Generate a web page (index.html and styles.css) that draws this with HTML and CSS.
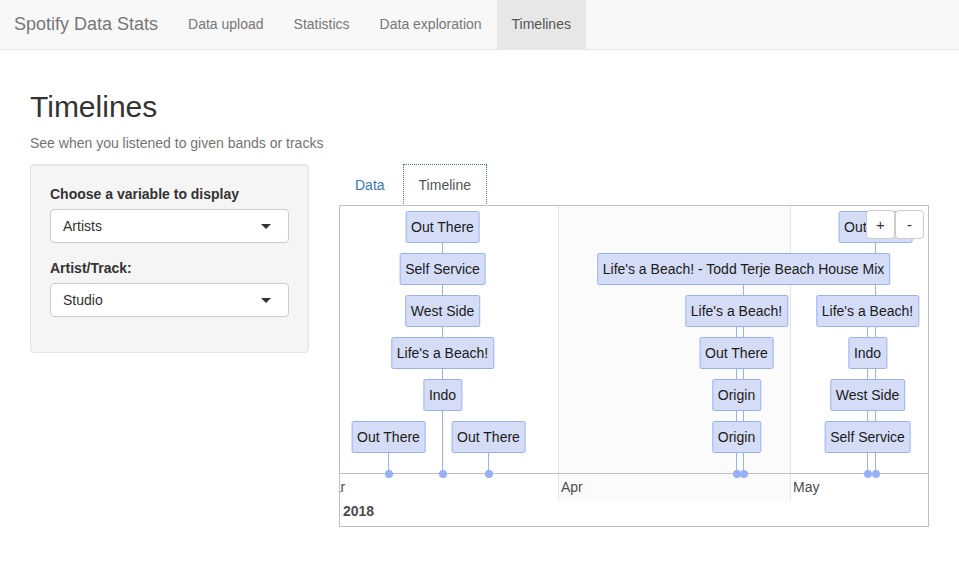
FILE: index.html
```html
<!DOCTYPE html>
<html>
<head>
<meta charset="utf-8">
<title>Spotify Data Stats</title>
<link rel="stylesheet" href="styles.css">
</head>
<body>
<nav class="navbar">
  <span class="brand">Spotify Data Stats</span>
  <ul class="nav">
    <li><a>Data upload</a></li>
    <li><a>Statistics</a></li>
    <li><a>Data exploration</a></li>
    <li class="active"><a>Timelines</a></li>
  </ul>
</nav>
<main class="page">
  <h2 class="title">Timelines</h2>
  <p class="subtitle">See when you listened to given bands or tracks</p>
  <div class="row">
    <aside class="well">
      <div class="form-group">
        <label class="control-label">Choose a variable to display</label>
        <div class="select"><span>Artists</span><span class="caret"></span></div>
      </div>
      <div class="form-group">
        <label class="control-label">Artist/Track:</label>
        <div class="select"><span>Studio</span><span class="caret"></span></div>
      </div>
    </aside>
    <section class="mainpanel">
      <ul class="tabs">
        <li><a>Data</a></li>
        <li class="active"><a>Timeline</a></li>
      </ul>
      <div class="timeline">
        <div class="band" style="left:218px;width:232px"></div>
        <div class="grid" style="left:218px"></div>
        <div class="grid" style="left:450px"></div>
        <div class="axis"></div>
        <span class="minor" style="left:-19px">Mar</span>
        <span class="minor" style="left:221px">Apr</span>
        <span class="minor" style="left:453px">May</span>
        <span class="major" style="left:3px">2018</span>

        <div class="line" style="left:102px;top:37px;height:230px"></div>
        <div class="line" style="left:48px;top:247px;height:20px"></div>
        <div class="line" style="left:148px;top:247px;height:20px"></div>
        <div class="line" style="left:403px;top:79px;height:188px"></div>
        <div class="line" style="left:396px;top:121px;height:146px"></div>
        <div class="line" style="left:535px;top:37px;height:230px"></div>
        <div class="line" style="left:527px;top:121px;height:146px"></div>

        <div class="dot" style="left:102.5px"></div>
        <div class="dot" style="left:48.5px"></div>
        <div class="dot" style="left:148.5px"></div>
        <div class="dot" style="left:396.5px"></div>
        <div class="dot" style="left:403.5px"></div>
        <div class="dot" style="left:527.5px"></div>
        <div class="dot" style="left:535.5px"></div>

        <div class="item" style="left:102.5px;top:5px">Out There</div>
        <div class="item" style="left:102.5px;top:47px">Self Service</div>
        <div class="item" style="left:102.5px;top:89px">West Side</div>
        <div class="item" style="left:102.5px;top:131px">Life's a Beach!</div>
        <div class="item" style="left:102.5px;top:173px">Indo</div>
        <div class="item" style="left:48.5px;top:215px">Out There</div>
        <div class="item" style="left:148.5px;top:215px">Out There</div>

        <div class="item" style="left:403.5px;top:47px">Life's a Beach! - Todd Terje Beach House Mix</div>
        <div class="item" style="left:396.5px;top:89px">Life's a Beach!</div>
        <div class="item" style="left:396.5px;top:131px">Out There</div>
        <div class="item" style="left:396.5px;top:173px">Origin</div>
        <div class="item" style="left:396.5px;top:215px">Origin</div>

        <div class="item" style="left:535.5px;top:5px">Out There</div>
        <div class="item" style="left:527.5px;top:89px">Life's a Beach!</div>
        <div class="item" style="left:527.5px;top:131px">Indo</div>
        <div class="item" style="left:527.5px;top:173px">West Side</div>
        <div class="item" style="left:527.5px;top:215px">Self Service</div>

        <div class="zoom-menu">
          <button class="zbtn">+</button>
          <button class="zbtn">-</button>
        </div>
      </div>
    </section>
  </div>
</main>
</body>
</html>
```
FILE: styles.css
```css
* { box-sizing: border-box; }

body {
  margin: 0;
  font-family: "Liberation Sans", Arial, Helvetica, sans-serif;
  font-size: 14px;
  line-height: 20px;
  color: #333;
  background: #fff;
}

.navbar {
  display: flex;
  height: 50px;
  background: #f8f8f8;
  border-bottom: 1px solid #e7e7e7;
}

.brand {
  padding: 14px 15px 15px 14px;
  font-size: 18px;
  line-height: 20px;
  color: #777;
}

.nav {
  display: flex;
  margin: 0;
  padding: 0;
  list-style: none;
}

.nav a {
  display: block;
  padding: 14px 15px 15px;
  line-height: 20px;
  color: #777;
}

.nav .active a {
  background: #e7e7e7;
  color: #555;
  height: 49px;
}

.page {
  padding: 20px 30px 0;
}

.title {
  margin: 20px 0 10px;
  font-size: 30px;
  line-height: 33px;
  font-weight: normal;
  color: #333;
}

.subtitle {
  margin: 0 0 11px;
  color: #737373;
}

.row {
  display: flex;
  align-items: flex-start;
  gap: 30px;
}

.well {
  width: 279px;
  flex: none;
  padding: 19px 19px 20px;
  background: #f5f5f5;
  border: 1px solid #e3e3e3;
  border-radius: 4px;
  box-shadow: inset 0 1px 1px rgba(0, 0, 0, 0.05);
}

.form-group {
  margin-bottom: 15px;
}

.control-label {
  display: block;
  margin-bottom: 5px;
  font-weight: bold;
}

.select {
  display: flex;
  align-items: center;
  justify-content: space-between;
  height: 34px;
  padding: 6px 17px 6px 12px;
  background: #fff;
  border: 1px solid #ccc;
  border-radius: 4px;
  color: #333;
}

.caret {
  width: 0;
  height: 0;
  border-top: 5px solid #333;
  border-left: 5px solid transparent;
  border-right: 5px solid transparent;
}

.mainpanel {
  flex: 1;
  min-width: 0;
}

.tabs {
  display: flex;
  margin: 0;
  padding: 0;
  list-style: none;
}

.tabs li {
  margin-right: 2px;
  margin-bottom: -1px;
}

.tabs a {
  display: block;
  padding: 10px 15px;
  line-height: 20px;
  border: 1px solid transparent;
  border-radius: 4px 4px 0 0;
  color: #337ab7;
}

.tabs .active a {
  color: #555;
  background: #fff;
  border: 1px dotted #3d73b0;
  border-radius: 0;
}

.timeline {
  position: relative;
  height: 322px;
  border: 1px solid #bfbfbf;
  overflow: hidden;
  background: #fff;
}

.band {
  position: absolute;
  top: 0;
  height: 295px;
  background: #fbfbfb;
}

.grid {
  position: absolute;
  top: 0;
  width: 1px;
  height: 295px;
  background: #e5e5e5;
}

.axis {
  position: absolute;
  left: 0;
  right: 0;
  top: 267px;
  height: 1px;
  background: #bfbfbf;
}

.minor {
  position: absolute;
  top: 271px;
  line-height: 20px;
  color: #4d4d4d;
  white-space: nowrap;
}

.major {
  position: absolute;
  top: 295px;
  line-height: 20px;
  font-weight: bold;
  color: #4d4d4d;
}

.line {
  position: absolute;
  width: 1px;
  background: #97b0f8;
}

.dot {
  position: absolute;
  top: 267.5px;
  width: 8px;
  height: 8px;
  border-radius: 50%;
  background: #97b0f8;
  transform: translate(-50%, -50%);
}

.item {
  position: absolute;
  transform: translateX(-50%);
  padding: 5px;
  line-height: 20px;
  background: #d5ddf6;
  border: 1px solid #97b0f8;
  border-radius: 2px;
  color: #1a1a1a;
  white-space: nowrap;
}

.zoom-menu {
  position: absolute;
  top: 4px;
  right: 4px;
  display: flex;
}

.zbtn {
  width: 29px;
  height: 29px;
  padding: 0;
  background: #fff;
  border: 1px solid #ccc;
  border-radius: 4px;
  font-family: "Liberation Sans", Arial, sans-serif;
  font-size: 15px;
  line-height: 20px;
  color: #333;
}
```
